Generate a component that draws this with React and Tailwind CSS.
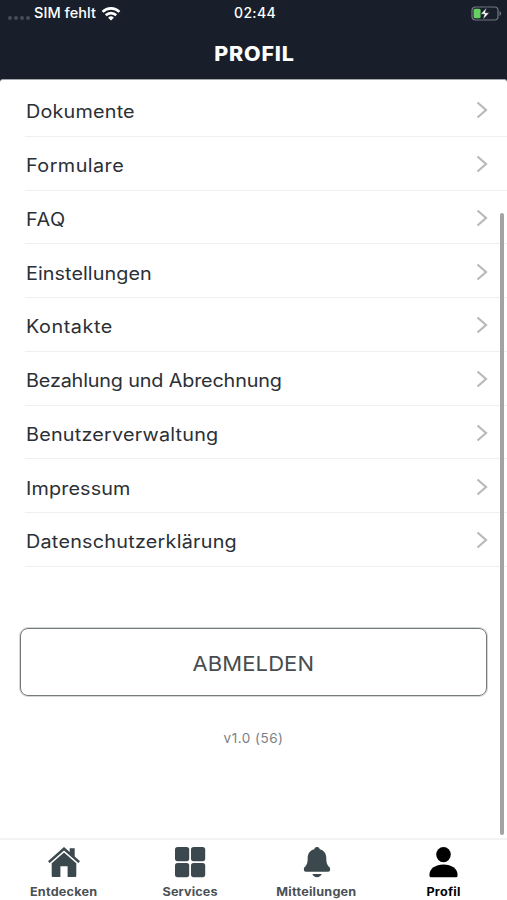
const entries = [
  { label: "Dokumente", spacing: "tracking-[0.17px]" },
  { label: "Formulare", spacing: "tracking-[0.4px]" },
  { label: "FAQ", spacing: "tracking-[0.5px]" },
  { label: "Einstellungen", spacing: "tracking-[0.05px]" },
  { label: "Kontakte", spacing: "tracking-[0.5px]" },
  { label: "Bezahlung und Abrechnung", spacing: "tracking-[-0.15px]" },
  { label: "Benutzerverwaltung", spacing: "tracking-[0.19px]" },
  { label: "Impressum", spacing: "tracking-[0.12px]" },
  { label: "Datenschutzerklärung", spacing: "tracking-[0.21px]" },
];

function StatusBar() {
  return (
    <div className="flex h-[26px] items-center">
      <div className="flex flex-1 items-center pl-2">
        <div className="mt-[9px] flex gap-[2px]">
          {[0, 1, 2, 3].map((i) => (
            <span key={i} className="size-[4px] rounded-full bg-[#474d58]" />
          ))}
        </div>
        <span className="ml-[4px] whitespace-nowrap text-[14.5px] leading-none font-medium tracking-[0.05px]">SIM fehlt</span>
        <svg className="ml-[5px]" width="20" height="15" viewBox="0 0 20 15" fill="none" stroke="currentColor" strokeWidth="2.7">
          <path d="M1.6 5.9a12 12 0 0 1 16.8 0" />
          <path d="M4.8 9.3a7.4 7.4 0 0 1 10.4 0" />
          <path d="M10 14.6 7.1 11.7a4.2 4.2 0 0 1 5.8 0Z" fill="currentColor" stroke="none" />
        </svg>
      </div>
      <span className="text-[14px] leading-none font-medium tracking-[0.3px]">02:44</span>
      <div className="flex flex-1 justify-end pr-[5px]">
        <svg width="31" height="15" viewBox="0 0 31 15">
          <rect x="1" y="1" width="26" height="13" rx="3.5" fill="none" stroke="#737980" strokeWidth="1.2" />
          <path d="M28.5 5v5q1.6-.8 1.6-2.5T28.5 5Z" fill="#737980" />
          <rect x="2.6" y="2.8" width="7" height="9.4" rx="1.5" fill="#65d163" />
          <path d="M15.8 1.5 9.4 8.2h4l-1.6 5.6 6.6-7h-4.2Z" fill="#fff" stroke="#181f2a" strokeWidth="0.6" />
        </svg>
      </div>
    </div>
  );
}

function HomeIcon() {
  return (
    <svg className="ml-[2px] shrink-0" width="34" height="32" viewBox="0 0 34 32" fill="#3b484e">
      <path d="M17 1 1 15.2l1.7 1.8L17 4.5 31.3 17l1.7-1.8-5.3-4.7V2.2h-5V6Z" />
      <path d="M17 6.4 4.7 17.2v12.6q0 1.2 1.2 1.2h7.5V20.3h7.2V31h7.5q1.2 0 1.2-1.2V17.2Z" />
    </svg>
  );
}

function GridIcon() {
  return (
    <svg className="shrink-0" width="34" height="32" viewBox="0 0 34 32" fill="#3b484e">
      <rect x="2" y="1" width="14.2" height="14.2" rx="2.6" />
      <rect x="18" y="1" width="14.2" height="14.2" rx="2.6" />
      <rect x="2" y="17" width="14.2" height="14.2" rx="2.6" />
      <rect x="18" y="17" width="14.2" height="14.2" rx="2.6" />
    </svg>
  );
}

function BellIcon() {
  return (
    <svg className="ml-[1px] shrink-0" width="34" height="32" viewBox="0 0 34 32" fill="#3b484e">
      <path d="M17 1c-1.5 0-2.5.8-2.7 2.2C9.600 4.400 7.700 8 7.700 12c0 5.500-1 7-3.200 9.300-.7.8-.6 1.500-.6 2.300 0 1.400.7 2.200 2 2.200h22.200c1.300 0 2-.8 2-2.200 0-.8.1-1.500-.6-2.300-2.200-2.300-3.200-3.800-3.200-9.300 0-4-1.900-7.600-6.600-8.800C19.500 1.800 18.500 1 17 1Z" />
      <path d="M12.300 28h9.400c-.7 1.900-2.500 3.200-4.700 3.200s-4-1.300-4.700-3.200Z" />
    </svg>
  );
}

function PersonIcon() {
  return (
    <svg className="shrink-0" width="34" height="32" viewBox="0 0 34 32" fill="#000">
      <ellipse cx="16.500" cy="8.600" rx="7.300" ry="7.700" />
      <path d="M2.500 29.700v-1.500C2.500 22.700 8.500 18.400 16.500 18.400s14 4.300 14 9.800v1.500q0 1.500-1.500 1.500H4q-1.500 0-1.500-1.500Z" />
    </svg>
  );
}

const tabs = [
  { label: "Entdecken", Icon: HomeIcon, color: "text-[#4a5155]", spacing: "tracking-[0.2px] ml-[1px]" },
  { label: "Services", Icon: GridIcon, color: "text-[#4a5155]", spacing: "tracking-[0.1px]" },
  { label: "Mitteilungen", Icon: BellIcon, color: "text-[#4a5155]", spacing: "tracking-[0.2px]" },
  { label: "Profil", Icon: PersonIcon, color: "text-black", spacing: "tracking-[0.2px]" },
];

export default function App() {
  return (
    <div className="relative flex h-[900px] w-[507px] flex-col overflow-hidden bg-[#181f2a] font-['Inter',sans-serif]">
      <header className="h-[79px] shrink-0 text-white">
        <StatusBar />
        <h1 className="flex h-[56px] items-center justify-center pt-[1px] pl-[1px] text-[19.5px] leading-none font-extrabold tracking-[0.7px]">
          <span className="origin-center scale-x-110">PROFIL</span>
        </h1>
      </header>
      <main className="flex flex-1 flex-col rounded-t-[3px] border-t border-[#a3a7ac] bg-white pt-[3px]">
        <ul>
          {entries.map(({ label, spacing }) => (
            <li key={label} className="ml-[25px] flex h-[53.75px] items-center justify-between border-b border-[#f0f0f0] pt-[2px] pr-[19px]">
              <span className={`ml-[0.5px] origin-left scale-x-110 pt-[4px] text-[18px] leading-none text-[#2b3036] ${spacing}`}>{label}</span>
              <svg width="12" height="18" viewBox="0 0 12 18" fill="none" stroke="#b9b9b9" strokeWidth="2.2">
                <path d="m1.500 1.500 8.500 7.500-8.500 7.500" />
              </svg>
            </li>
          ))}
        </ul>
        <button className="mx-[20px] mt-[61px] flex h-[68px] shrink-0 items-center justify-center rounded-[8px] border-[1.500px] border-[#747979] pt-[4px] text-[20px] text-[#474c50] ring-1 ring-[#747979]/30">
          <span className="scale-x-110 tracking-[0.1px]">ABMELDEN</span>
        </button>
        <p className="mt-[34px] text-center text-[13.500px] leading-[16px] tracking-[0.5px] text-[#7c8084]">v1.0 (56)</p>
      </main>
      <nav className="flex h-[62px] shrink-0 border-t-2 border-[#f3f3f3] bg-white">
        {tabs.map(({ label, Icon, color, spacing }) => (
          <div key={label} className="flex flex-1 flex-col items-center pt-[6px]">
            <Icon />
            <span className={`mt-[6px] scale-x-110 text-[11.500px] leading-[16px] font-bold ${color} ${spacing}`}>{label}</span>
          </div>
        ))}
      </nav>
      <div className="absolute top-[213px] right-[3px] h-[622px] w-[4px] rounded-full bg-[#a3a3a3]" />
    </div>
  );
}
